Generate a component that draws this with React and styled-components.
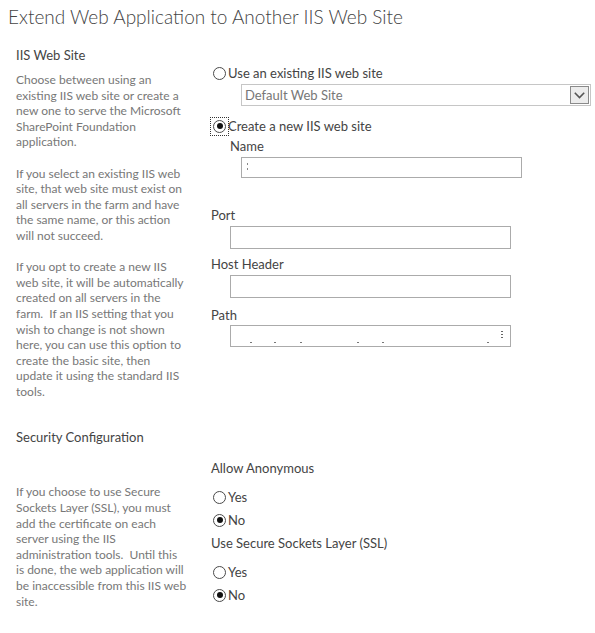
import React from "react";
import styled, { createGlobalStyle } from "styled-components";

const Global = createGlobalStyle`
  html, body { margin: 0; padding: 0; background: #fff; }
  body { font-family: Lato, "Open Sans", sans-serif; color: #444; }
`;

const Page = styled.div`
  width: 595px;
  height: 633px;
  overflow: hidden;
  background: #fff;
`;

const Title = styled.h1`
  margin: 0;
  padding: 3px 0 0 8px;
  font-family: Lato, "Open Sans", sans-serif;
  font-size: 19px;
  line-height: 28px;
  font-weight: 300;
  color: #444;
  white-space: nowrap;
`;

const Section = styled.section`
  display: grid;
  grid-template-columns: 195px 384px;
  padding-left: 16px;
  margin-top: ${(p) => p.$top}px;
`;

const LeftCol = styled.div`
  display: flex;
  flex-direction: column;
`;

const SectionTitle = styled.h3`
  margin: 0;
  font-size: 13px;
  line-height: 16px;
  font-weight: 400;
  color: #444;
  white-space: nowrap;
`;

const Description = styled.p`
  margin: ${(p) => p.$gap}px 0 0 0;
  font-size: 12px;
  line-height: 15.6px;
  color: #777;
  white-space: nowrap;
`;

const RightCol = styled.div`
  display: flex;
  flex-direction: column;
  padding-top: ${(p) => p.$top}px;
`;

const RadioRow = styled.label`
  display: flex;
  align-items: center;
  height: 20px;
  margin-top: ${(p) => p.$gap || 0}px;
  font-size: 13px;
  color: #444;
  white-space: nowrap;
`;

const FocusBox = styled.span`
  box-sizing: border-box;
  display: flex;
  align-items: center;
  justify-content: center;
  width: 19px;
  height: 19px;
  margin: 0 -1px 0 -1px;
  border: 1px dotted ${(p) => (p.$focus ? "#333" : "transparent")};
  flex: none;
`;

const Radio = styled.span`
  position: relative;
  box-sizing: border-box;
  width: 13px;
  height: 13px;
  border: 1px solid #4a4a4a;
  border-radius: 50%;
  background: #fff;
  &::after {
    content: "";
    display: ${(p) => (p.$checked ? "block" : "none")};
    position: absolute;
    left: 2.5px;
    top: 2.5px;
    width: 6px;
    height: 6px;
    border-radius: 50%;
    background: #111;
  }
`;

const FieldLabel = styled.div`
  margin: ${(p) => p.$gap || 0}px 0 0 ${(p) => p.$indent || 0}px;
  font-size: 13px;
  line-height: 16px;
  color: #444;
  white-space: nowrap;
`;

const Select = styled.div`
  box-sizing: border-box;
  display: flex;
  align-items: center;
  justify-content: space-between;
  width: 350px;
  height: 22px;
  margin: 1px 0 0 30px;
  padding: 0 1px 0 3px;
  border: 1px solid #c6c6c6;
  font-size: 13px;
  color: #777;
`;

const SelectArrow = styled.span`
  box-sizing: border-box;
  display: flex;
  align-items: center;
  justify-content: center;
  width: 19px;
  height: 18px;
  border: 1px solid #8a8a8a;
  background: #ececec;
`;

const TextBox = styled.div`
  box-sizing: border-box;
  position: relative;
  display: flex;
  align-items: ${(p) => (p.$bottom ? "flex-end" : "center")};
  width: 281px;
  height: ${(p) => p.$h}px;
  margin: ${(p) => p.$gap}px 0 0 ${(p) => p.$indent}px;
  padding: 0 5px;
  border: 1px solid #ababab;
  background: #fff;
`;

const Dot = styled.span`
  width: 2px;
  height: 1px;
  margin-left: ${(p) => p.$gap}px;
  margin-bottom: 3px;
  background: #777;
  flex: none;
`;

const Scroller = styled.span`
  position: absolute;
  right: 7px;
  top: 5px;
  width: 2px;
  height: 9px;
  background: repeating-linear-gradient(#666 0 1px, transparent 1px 3px);
`;

const Caret = styled.span`
  width: 1px;
  height: 9px;
  background: repeating-linear-gradient(#888 0 2px, transparent 2px 5px);
`;

function Chevron() {
  return (
    <svg width="11" height="7" viewBox="0 0 11 7">
      <path d="M0.8 0.8 L5.5 5.5 L10.2 0.8" fill="none" stroke="#555" strokeWidth="1.6" />
    </svg>
  );
}

function RadioOption({ checked, focus, children, gap }) {
  return (
    <RadioRow $gap={gap}>
      <FocusBox $focus={focus}>
        <Radio $checked={checked} />
      </FocusBox>
      {children}
    </RadioRow>
  );
}

export default function App() {
  return (
    <Page>
      <Global />
      <Title>Extend Web Application to Another IIS Web Site</Title>

      <Section $top={16}>
        <LeftCol>
          <SectionTitle>IIS Web Site</SectionTitle>
          <Description $gap={9}>
            Choose between using an<br />
            existing IIS web site or create a<br />
            new one to serve the Microsoft<br />
            SharePoint Foundation<br />
            application.<br />
            <br />
            If you select an existing IIS web<br />
            site, that web site must exist on<br />
            all servers in the farm and have<br />
            the same name, or this action<br />
            will not succeed.<br />
            <br />
            If you opt to create a new IIS<br />
            web site, it will be automatically<br />
            created on all servers in the<br />
            farm.&nbsp; If an IIS setting that you<br />
            wish to change is not shown<br />
            here, you can use this option to<br />
            create the basic site, then<br />
            update it using the standard IIS<br />
            tools.
          </Description>
        </LeftCol>
        <RightCol $top={16}>
          <RadioOption>Use an existing IIS web site</RadioOption>
          <Select>
            Default Web Site
            <SelectArrow>
              <Chevron />
            </SelectArrow>
          </Select>
          <RadioOption gap={10} checked focus>
            Create a new IIS web site
          </RadioOption>
          <FieldLabel $gap={2} $indent={19}>Name</FieldLabel>
          <TextBox $h={21} $gap={3} $indent={30}>
            <Caret />
          </TextBox>
          <FieldLabel $gap={29}>Port</FieldLabel>
          <TextBox $h={23} $gap={3} $indent={19} />
          <FieldLabel $gap={7}>Host Header</FieldLabel>
          <TextBox $h={23} $gap={3} $indent={19} />
          <FieldLabel $gap={9}>Path</FieldLabel>
          <TextBox $h={22} $gap={2} $indent={19} $bottom>
            {[14, 22, 24, 55, 23, 103].map((g, i) => (
              <Dot key={i} $gap={g} />
            ))}
            <Scroller />
          </TextBox>
        </RightCol>
      </Section>

      <Section $top={30}>
        <LeftCol>
          <SectionTitle>Security Configuration</SectionTitle>
          <Description $gap={39}>
            If you choose to use Secure<br />
            Sockets Layer (SSL), you must<br />
            add the certificate on each<br />
            server using the IIS<br />
            administration tools.&nbsp; Until this<br />
            is done, the web application will<br />
            be inaccessible from this IIS web<br />
            site.
          </Description>
        </LeftCol>
        <RightCol $top={31}>
          <FieldLabel>Allow Anonymous</FieldLabel>
          <RadioOption gap={11}>Yes</RadioOption>
          <RadioOption gap={3} checked>No</RadioOption>
          <FieldLabel $gap={5}>Use Secure Sockets Layer (SSL)</FieldLabel>
          <RadioOption gap={11}>Yes</RadioOption>
          <RadioOption gap={3} checked>No</RadioOption>
        </RightCol>
      </Section>
    </Page>
  );
}
